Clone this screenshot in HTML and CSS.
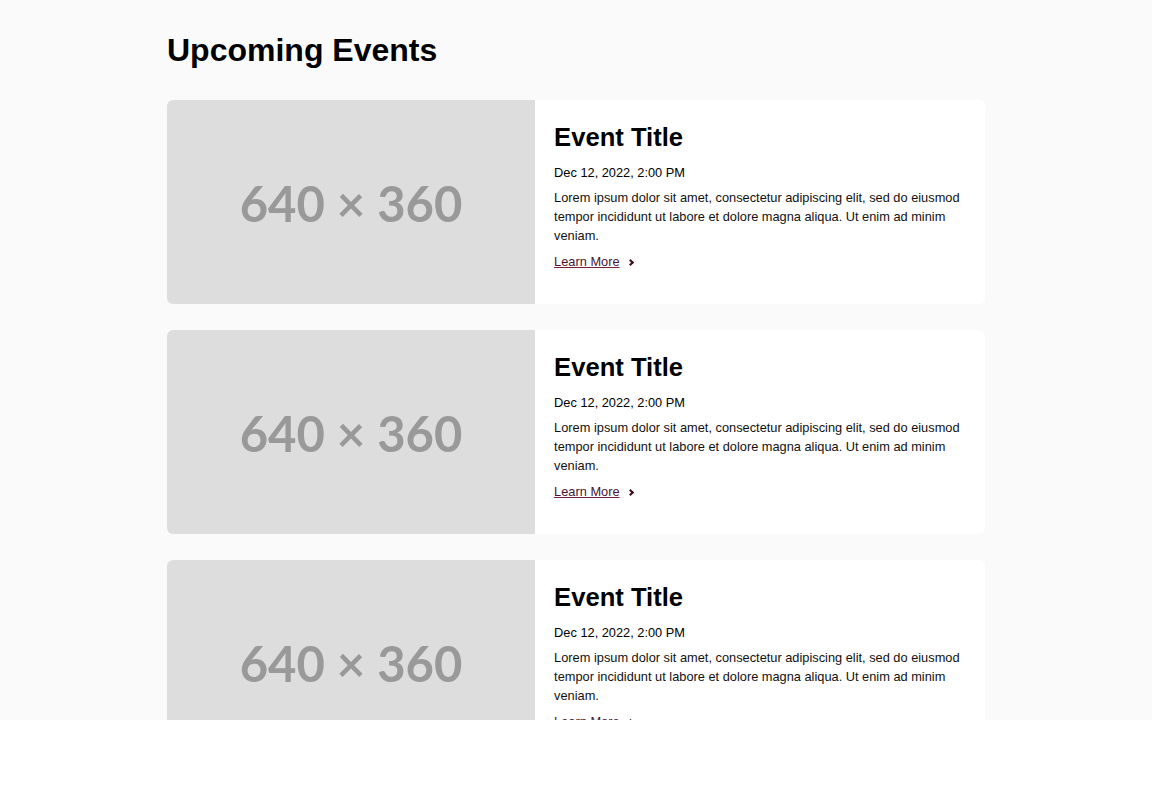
FILE: index.html
```html
<!DOCTYPE html>
<html lang="en">
<head>
    <meta charset="UTF-8">
    <meta name="viewport" content="width=device-width, initial-scale=1.0">
    <title>Upcoming Events</title>
    <link rel="stylesheet" href="styles.css">
</head>
<body>
    <div id="page">
        <main class="events">
            <h1>Upcoming Events</h1>

            <!-- event cards -->
            <article class="event-card">
                <div class="event-media"><span>640 &times; 360</span></div>
                <div class="event-body">
                    <h3>Event Title</h3>
                    <p class="event-date">Dec 12, 2022, 2:00 PM</p>
                    <p class="event-text">Lorem ipsum dolor sit amet, consectetur adipiscing elit, sed do eiusmod tempor incididunt ut labore et dolore magna aliqua. Ut enim ad minim veniam.</p>
                    <a class="more" href="#">Learn More</a>
                </div>
            </article>

            <article class="event-card">
                <div class="event-media"><span>640 &times; 360</span></div>
                <div class="event-body">
                    <h3>Event Title</h3>
                    <p class="event-date">Dec 12, 2022, 2:00 PM</p>
                    <p class="event-text">Lorem ipsum dolor sit amet, consectetur adipiscing elit, sed do eiusmod tempor incididunt ut labore et dolore magna aliqua. Ut enim ad minim veniam.</p>
                    <a class="more" href="#">Learn More</a>
                </div>
            </article>

            <article class="event-card">
                <div class="event-media"><span>640 &times; 360</span></div>
                <div class="event-body">
                    <h3>Event Title</h3>
                    <p class="event-date">Dec 12, 2022, 2:00 PM</p>
                    <p class="event-text">Lorem ipsum dolor sit amet, consectetur adipiscing elit, sed do eiusmod tempor incididunt ut labore et dolore magna aliqua. Ut enim ad minim veniam.</p>
                    <a class="more" href="#">Learn More</a>
                </div>
            </article>
        </main>
    </div>
</body>
</html>
```
FILE: styles.css
```css
html {
    background: #fff;
}
body {
    margin: 0;
    padding: 0;
    font-family: "Liberation Sans", Arial, sans-serif;
    color: #000;
}
#page {
    height: 720px;
    overflow: hidden;
    background: #fafafa;
}
.events {
    width: 818px;
    margin: 0 auto;
    padding-top: 32px;
}
.events h1 {
    font-size: 32px;
    line-height: 37px;
    margin: 0 0 31px;
}
.event-card {
    display: flex;
    height: 204px;
    margin-bottom: 26px;
    background: #fff;
    border-radius: 6px;
    overflow: hidden;
}
.event-media {
    width: 45%;
    flex-shrink: 0;
    background: #dddddd;
    display: flex;
    justify-content: center;
    align-items: center;
}
.event-media span {
    font-family: Lato, "Open Sans", sans-serif;
    font-weight: bold;
    font-size: 49px;
    color: #999;
    padding-top: 2px;
}
.event-body {
    flex: 1;
    padding: 22px 20px 0 19px;
    font-size: 12.8px;
    line-height: 1.5;
}
.event-body h3 {
    font-size: 25.6px;
    line-height: 1.2;
    margin: 0 0 10px;
}
.event-date {
    margin: 0 0 6px;
}
.event-text {
    margin: 0 0 7px;
    color: #111;
}
.more {
    color: #4a1530;
    text-decoration: underline;
    text-decoration-color: #7a1f3a;
}
.more::after {
    content: "";
    display: inline-block;
    width: 3px;
    height: 3px;
    margin-left: 8px;
    border-right: 2px solid #3a0d1c;
    border-top: 2px solid #3a0d1c;
    transform: rotate(45deg);
    vertical-align: 1px;
}
```
